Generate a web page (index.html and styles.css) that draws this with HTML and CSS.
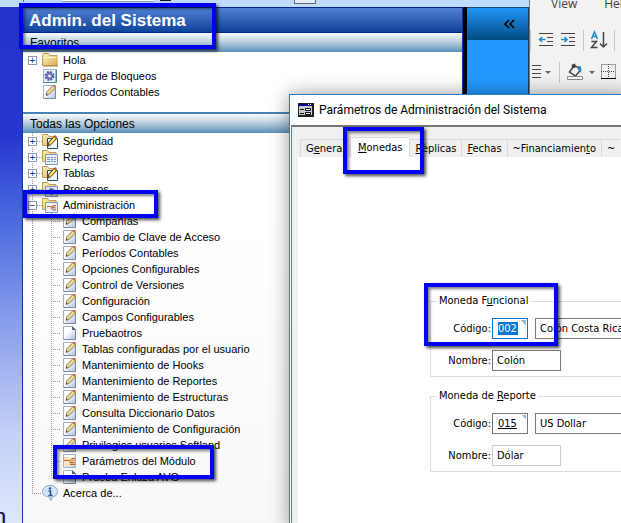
FILE: index.html
```html
<!DOCTYPE html>
<html lang="es">
    <head>
        <meta charset="utf-8">
        <title>Admin. del Sistema</title>
        <link rel="stylesheet" href="styles.css">
    </head>
    <body>
        <svg class="defs" aria-hidden="true">
            <defs>
                <linearGradient id="paper" x1="0" y1="0" x2="1" y2="1">
                    <stop offset="0.4" stop-color="#fff"/>
                    <stop offset="1" stop-color="#a9bfe0"/>
                </linearGradient>
                <linearGradient id="yellow" x1="0" y1="0" x2="1" y2="1">
                    <stop offset="0" stop-color="#fff0bc"/>
                    <stop offset="1" stop-color="#dfae55"/>
                </linearGradient>
                <symbol id="i-page" viewBox="0 0 16 16">
                    <path d="M1.5 1.5h9l3 3v10h-12z" fill="url(#paper)" stroke="#9fb0c8"/>
                    <path d="M1.5 14.5h12v-10" fill="none" stroke="#7b8aa2"/>
                    <path d="M10 1l4 4h-4z" fill="#56657c"/>
                </symbol>
                <symbol id="i-edit" viewBox="0 0 16 16">
                    <path d="M1.5 1.5h12v13h-12z" fill="url(#paper)" stroke="#9fb0c8"/>
                    <path d="M1.5 14.5h12v-10" fill="none" stroke="#7b8aa2"/>
                    <path d="M4 11l1-3.500 6-6 2.500 2.500-6 6z" fill="#f3d88c" stroke="#8a7f60"/>
                    <path d="M10.500 1.500l1.500-1 2 2-1 1.500z" fill="#cf6b62"/>
                    <path d="M4 9.500v2h2z" fill="#444"/>
                </symbol>
                <symbol id="i-folder" viewBox="0 0 16 16">
                    <path d="M.5 13.500v-11l1-1h5l1.500 2h7v10z" fill="url(#yellow)" stroke="#c49c55"/>
                    <path d="M1.500 5.500h13" stroke="#fff6d5"/>
                    <path d="M1 14h15" stroke="#a88242"/>
                </symbol>
                <symbol id="i-folder-edit" viewBox="0 0 16 16">
                    <path d="M.5 12.500v-11h5l1.500 2h7v9z" fill="url(#yellow)" stroke="#c49c55"/>
                    <path d="M5.500 5.500h10v10h-10z" fill="#eef4fc" stroke="#39475c"/>
                    <path d="M6 13l1-4 5-5.500 2.500 2-5.500 6z" fill="#ffe34f" stroke="#3b321b"/>
                    <path d="M12 3l1-1 2 2-1 1z" fill="#c0504d"/>
                </symbol>
                <symbol id="i-folder-list" viewBox="0 0 16 16">
                    <path d="M.5 12.500v-11h5l1.500 2h7v9z" fill="url(#yellow)" stroke="#c49c55"/>
                    <path d="M3.500 5.500h12v10h-12z" fill="#e9f0fa" stroke="#7f97b9"/>
                    <path d="M5 8.500h3m1 0h2m1 0h2M5 10.500h3m1 0h2m1 0h2M5 12.500h3m1 0h2m1 0h2" stroke="#8293bd"/>
                </symbol>
                <symbol id="i-folder-gear" viewBox="0 0 16 16">
                    <path d="M.5 12.500v-11h5l1.500 2h7v9z" fill="url(#yellow)" stroke="#c49c55"/>
                    <path d="M3.500 5.500h12v10h-12z" fill="#dfe6f8" stroke="#7f97b9"/>
                    <circle cx="9.500" cy="10.500" r="3" fill="#6870bd" stroke="#4b529b" stroke-dasharray="2 1"/>
                </symbol>
                <symbol id="i-folder-hand" viewBox="0 0 16 16">
                    <path d="M.5 12.500v-11h5l1.500 2h7v9z" fill="url(#yellow)" stroke="#c49c55"/>
                    <path d="M3.500 5.500h12v10h-12z" fill="#e9f0fa" stroke="#7f97b9"/>
                    <path d="M5 9.500h4l2 1h2M14 8.500h-3l-2 3 2 1.500h3" fill="#eeb88d" stroke="#b36f47"/>
                </symbol>
                <symbol id="i-gear" viewBox="0 0 16 16">
                    <path d="M1.500 1.500h12v13h-12z" fill="#edf1fc" stroke="#a8b2c8"/>
                    <path d="M1 14.500h13.500v-13" fill="none" stroke="#3f8b95"/>
                    <circle cx="7.500" cy="8" r="4" fill="none" stroke="#555da8" stroke-width="2" stroke-dasharray="2 1.140"/>
                    <circle cx="7.500" cy="8" r="3" fill="#8189c8" stroke="#555da8"/>
                    <circle cx="7.500" cy="8" r="1.200" fill="#fff"/>
                </symbol>
                <symbol id="i-hand" viewBox="0 0 16 16">
                    <path d="M1.500 1.500h12v13h-12z" fill="url(#paper)" stroke="#9fb0c8"/>
                    <path d="M2 4h11v9H2z" fill="#fbe3bd"/>
                    <path d="M2 7.500h5l2 1.500h2" fill="none" stroke="#a8683c"/>
                    <path d="M13 5.500h-3l-3 3 1 2.500 2 1h3z" fill="#eeb27c"/>
                    <path d="M13 5.500h-3l-2 2M7.500 9.500h4M8 11.500h5" fill="none" stroke="#a8683c"/>
                </symbol>
                <symbol id="i-info" viewBox="0 0 16 16">
                    <path d="M8 .5c4.500 0 7.500 2.500 7.500 6 0 3-2 5-5 5.500L9 15.500 7 12C3 11.500.5 9.500.5 6.500.5 3 3.500.5 8 .5z" fill="#d5e4f5" stroke="#8ba5c4"/>
                    <circle cx="8" cy="3.500" r="1.200" fill="#24528e"/>
                    <path d="M6.500 6h2v4M6.500 10.500h4" fill="none" stroke="#24528e" stroke-width="1.500"/>
                </symbol>
            </defs>
        </svg>

        <div class="screen">
            <div class="app">
                <div class="toolbar">
                    <span class="tool-mark"></span>
                    <span class="tool-box"></span>
                    <span class="tool-glyph"></span>
                    <span class="tool-button"></span>
                </div>
                <div class="workspace">
                    <div class="wallpaper"><span>n</span></div>
                    <nav class="nav">
                        <h1>Admin. del Sistema</h1>
                        <h2>Favoritos</h2>
                        <ul class="tree favorites">
                            <li><div class="row"><span class="expander">+</span><i class="stub blank"></i><svg><use href="#i-folder"/></svg><a href="#">Hola</a></div></li>
                            <li><div class="row leaf"><svg><use href="#i-gear"/></svg><a href="#">Purga de Bloqueos</a></div></li>
                            <li><div class="row leaf"><svg><use href="#i-edit"/></svg><a href="#">Períodos Contables</a></div></li>
                        </ul>
                        <h2 class="divided">Todas las Opciones</h2>
                        <ul class="tree options">
                            <li><div class="row"><span class="expander">+</span><i class="stub"></i><svg><use href="#i-folder-edit"/></svg><a href="#">Seguridad</a></div></li>
                            <li><div class="row"><span class="expander">+</span><i class="stub"></i><svg><use href="#i-folder-list"/></svg><a href="#">Reportes</a></div></li>
                            <li><div class="row"><span class="expander">+</span><i class="stub"></i><svg><use href="#i-folder-edit"/></svg><a href="#">Tablas</a></div></li>
                            <li><div class="row"><span class="expander">+</span><i class="stub"></i><svg><use href="#i-folder-gear"/></svg><a href="#">Procesos</a></div></li>
                            <li>
                                <div class="row"><span class="expander">−</span><i class="stub"></i><svg><use href="#i-folder-hand"/></svg><a href="#">Administración</a></div>
                                <ul class="branch">
                                    <li class="row"><i class="stub"></i><svg><use href="#i-edit"/></svg><a href="#">Compañías</a></li>
                                    <li class="row"><i class="stub"></i><svg><use href="#i-edit"/></svg><a href="#">Cambio de Clave de Acceso</a></li>
                                    <li class="row"><i class="stub"></i><svg><use href="#i-edit"/></svg><a href="#">Períodos Contables</a></li>
                                    <li class="row"><i class="stub"></i><svg><use href="#i-edit"/></svg><a href="#">Opciones Configurables</a></li>
                                    <li class="row"><i class="stub"></i><svg><use href="#i-edit"/></svg><a href="#">Control de Versiones</a></li>
                                    <li class="row"><i class="stub"></i><svg><use href="#i-edit"/></svg><a href="#">Configuración</a></li>
                                    <li class="row"><i class="stub"></i><svg><use href="#i-edit"/></svg><a href="#">Campos Configurables</a></li>
                                    <li class="row"><i class="stub"></i><svg><use href="#i-page"/></svg><a href="#">Pruebaotros</a></li>
                                    <li class="row"><i class="stub"></i><svg><use href="#i-edit"/></svg><a href="#">Tablas configuradas por el usuario</a></li>
                                    <li class="row"><i class="stub"></i><svg><use href="#i-edit"/></svg><a href="#">Mantenimiento de Hooks</a></li>
                                    <li class="row"><i class="stub"></i><svg><use href="#i-edit"/></svg><a href="#">Mantenimiento de Reportes</a></li>
                                    <li class="row"><i class="stub"></i><svg><use href="#i-edit"/></svg><a href="#">Mantenimiento de Estructuras</a></li>
                                    <li class="row"><i class="stub"></i><svg><use href="#i-edit"/></svg><a href="#">Consulta Diccionario Datos</a></li>
                                    <li class="row"><i class="stub"></i><svg><use href="#i-edit"/></svg><a href="#">Mantenimiento de Configuración</a></li>
                                    <li class="row"><i class="stub"></i><svg><use href="#i-edit"/></svg><a href="#">Privilegios usuarios Softland</a></li>
                                    <li class="row"><i class="stub"></i><svg><use href="#i-hand"/></svg><a href="#">Parámetros del Módulo</a></li>
                                    <li class="row"><i class="stub"></i><svg><use href="#i-page"/></svg><a href="#">Prueba Enlaza AVG</a></li>
                                </ul>
                            </li>
                            <li><div class="row last"><i class="stub"></i><svg><use href="#i-info"/></svg><a href="#">Acerca de...</a></div></li>
                        </ul>
                    </nav>
                    <aside class="side">
                        <button type="button" aria-label="Contraer">
                            <svg viewBox="0 0 12 10"><path d="M5 1L1 5l4 4M10 1L6 5l4 4" fill="none" stroke="#000" stroke-width="1.600"/></svg>
                        </button>
                    </aside>
                </div>
            </div>

            <div class="ribbon">
                <div class="ribbon-tabs"><a href="#">View</a><a href="#">Help</a></div>
                <svg class="ribbon-icons" viewBox="0 0 92 64" width="92" height="64">
                    <g fill="none" stroke="#444">
                        <path d="M9 10.500h14M17 14.500h6M17 18.500h6M9 22.500h14"/>
                        <path d="M31 10.500h14M39 14.500h6M39 18.500h6M31 22.500h14"/>
                        <path d="M9.500 16.500h6M12 14l-2.500 2.500L12 19M31 16.500h6M34.500 14l2.500 2.500-2.500 2.500" stroke="#2289cc" stroke-width="1.500"/>
                        <path d="M.5 7v21M53.500 7v21M84.500 7v21M29.500 39v21" stroke="#c8c6c4"/>
                        <path d="M61.500 16l3-7 3 7M62.500 13.500h4" stroke="#2289cc" stroke-width="1.500"/>
                        <path d="M61.500 18.500h5l-5 6h6" stroke-width="1.500"/>
                        <path d="M73.500 9v15M70 20.500l3.500 3.500 3.500-3.500" stroke-width="1.500"/>
                        <path d="M2 42.500h9M2 46.500h9M2 50.500h9M2 54.500h9"/>
                        <path d="M44.500 42l6 5-5 6-6-4zM44.500 45v-3.500l-2 .5v4" stroke-width="1.500"/>
                        <path d="M37.500 53.500h15v3h-15z" fill="#fff" stroke="#888"/>
                        <path d="M71.500 41.500h14v14h-14zM78.500 41v14M71 48.500h14" stroke-dasharray="1 1"/>
                        <path d="M71 55.500h15" stroke="#000"/>
                    </g>
                    <path d="M48 43c3-1 4 2 3 7-1-2-2-3-3-3z" fill="#2289cc"/>
                    <path d="M15 48h6l-3 3zM59 48h6l-3 3z" fill="#666"/>
                </svg>
            </div>
        </div>

        <div class="dialog" role="dialog" aria-labelledby="dialogTitle">
            <div class="dialog-title">
                <svg viewBox="0 0 16 14" width="16" height="14">
                    <path d="M0 0h16v14H0z" fill="#222"/>
                    <path d="M1 1h13v11H1z" fill="#c9c9c9"/>
                    <path d="M1 1h13v2H1z" fill="#00008b"/>
                    <path d="M10 1.500h1m1 0h1" stroke="#fff"/>
                    <path d="M2 6.500h4M2 10.500h4M7.500 5.500h5v2h-5zM7.500 9.500h5v2h-5z" fill="#fff" stroke="#111"/>
                </svg>
                <span id="dialogTitle">Parámetros de Administración del Sistema</span>
            </div>
            <div class="dialog-body">
                <div class="tabs" role="tablist">
                    <button type="button" role="tab">G<u>e</u>neral</button>
                    <button type="button" role="tab" class="active" aria-selected="true"><u>M</u>onedas</button>
                    <button type="button" role="tab"><u>R</u>éplicas</button>
                    <button type="button" role="tab"><u>F</u>echas</button>
                    <button type="button" role="tab">~Financiamien<u>t</u>o</button>
                    <button type="button" role="tab">~</button>
                </div>
                <form class="tab-page">
                    <fieldset>
                        <legend>Moneda F<u>u</u>ncional</legend>
                        <label for="funcCode">Código:</label>
                        <div class="fields">
                            <input type="text" id="funcCode" class="code selected" value="002">
                            <input type="text" class="wide" aria-label="Descripción" value="Colón Costa Rica">
                        </div>
                        <label for="funcName">Nombre:</label>
                        <div class="fields"><input type="text" id="funcName" class="name" value="Colón"></div>
                    </fieldset>
                    <fieldset>
                        <legend>Moneda de <u>R</u>eporte</legend>
                        <label for="repCode">Código:</label>
                        <div class="fields">
                            <input type="text" id="repCode" class="code" value="015">
                            <input type="text" class="wide" aria-label="Descripción" value="US Dollar">
                        </div>
                        <label for="repName">Nombre:</label>
                        <div class="fields"><input type="text" id="repName" class="name readonly" value="Dólar" readonly></div>
                    </fieldset>
                </form>
            </div>
        </div>

        <div class="mark mark-title"></div>
        <div class="mark mark-admin"></div>
        <div class="mark mark-params"></div>
        <div class="mark mark-tab"></div>
        <div class="mark mark-code"></div>
    </body>
</html>
```
FILE: styles.css
```css
* {
    box-sizing: border-box;
}
body {
    position: relative;
    margin: 0;
    height: 100vh;
    overflow: hidden;
    font-family: "Liberation Sans", Arial, sans-serif;
    font-size: 11px;
    color: #000;
}
a {
    color: inherit;
    text-decoration: none;
}
ul {
    list-style: none;
    margin: 0;
    padding: 0;
}
.defs {
    position: absolute;
    width: 0;
    height: 0;
}
.screen {
    display: flex;
    height: 100%;
}
.app {
    flex: 1;
    min-width: 0;
    display: flex;
    flex-direction: column;
}

/* top toolbar */
.toolbar {
    display: flex;
    align-items: flex-start;
    height: 7px;
    padding-left: 23px;
    background-color: #bfdbff;
}
.tool-mark {
    width: 1px;
    height: 2px;
    background-color: #5070b0;
}
.tool-box {
    width: 92px;
    height: 2px;
    margin-left: 38px;
    background-color: #fff;
    border-bottom: 1px solid #8a9ab5;
}
.tool-glyph {
    width: 11px;
    height: 1px;
    margin-left: 6px;
    background-color: #111;
}
.tool-button {
    width: 22px;
    height: 4px;
    margin-left: 123px;
    background-color: #e4ecf8;
    border: 1px solid #667;
    border-top: none;
}

/* navigation */
.workspace {
    flex: 1;
    min-height: 0;
    display: flex;
}
.wallpaper {
    display: flex;
    align-items: flex-end;
    width: 22px;
    overflow: hidden;
    background: linear-gradient(#2433cb, #2637cf 25%, #4a69df 41%, #8ba0ec 62%, #c3cff7 82%, #dde7fc);
    color: #101050;
    font-size: 24px;
}
.wallpaper span {
    line-height: 12px;
    margin-left: -7px;
}
.nav {
    flex: 1;
    min-width: 0;
    display: flex;
    flex-direction: column;
    border-left: 1px solid #0a37a0;
    border-right: 1px solid #0a37a0;
    background: linear-gradient(#fff 40%, #f8f8f8);
}
.nav h1 {
    margin: 0;
    height: 26px;
    padding-left: 6px;
    border-top: 1px solid #00248c;
    border-bottom: 1px solid #00248c;
    background: linear-gradient(#5180d2, #0f439a);
    color: #fff;
    font-size: 17px;
    line-height: 26px;
}
.nav h2 {
    margin: 0;
    height: 19px;
    padding-left: 7px;
    background: linear-gradient(#fafcfd, #b5cbdc 50%, #5a8fb9);
    font-size: 12px;
    font-weight: normal;
    line-height: 21px;
}
.nav .divided {
    height: 21px;
    border-top: 2px solid #4682b4;
}
.tree {
    padding-left: 5px;
}
.favorites {
    height: 60px;
}
.options {
    flex: 1;
    background: repeating-linear-gradient(#999 0 1px, transparent 1px 2px) 9px 0 / 1px 360px no-repeat;
}
.branch {
    padding-left: 23px;
    background: repeating-linear-gradient(#999 0 1px, transparent 1px 2px) 23px 0 / 1px 264px no-repeat;
}
.row {
    display: flex;
    align-items: center;
    height: 16px;
    white-space: nowrap;
}
.row svg {
    flex: none;
    width: 16px;
    height: 16px;
    margin-right: 5px;
}
.branch svg {
    margin-left: 2px;
    margin-right: 4px;
}
.leaf {
    padding-left: 14px;
}
.last {
    padding-left: 4px;
}
.expander {
    width: 9px;
    height: 9px;
    border: 1px solid #8a9bb5;
    background-color: #fff;
    color: #10308c;
    font-size: 10px;
    line-height: 7px;
    text-align: center;
}
.stub {
    width: 5px;
    height: 1px;
    background: repeating-linear-gradient(90deg, #999 0 1px, transparent 1px 2px);
}
.last .stub {
    width: 10px;
}
.branch .stub {
    width: 9px;
}
.stub.blank {
    background: none;
}

/* collapsed side column */
.side {
    width: 66px;
    border-left: 4px solid #000;
    border-right: 1px solid #163d63;
    background-color: #2299ff;
}
.side button {
    display: flex;
    justify-content: flex-end;
    align-items: center;
    width: 100%;
    height: 33px;
    padding: 0 12px;
    border: none;
    border-top: 1px solid #0a4a80;
    background: linear-gradient(#2196f8, #024a82);
}
.side svg {
    width: 12px;
    height: 10px;
}

/* office ribbon */
.ribbon {
    width: 92px;
    overflow: hidden;
    background-color: #f3f2f1;
    border-left: 1px solid #777;
}
.ribbon-tabs {
    display: flex;
    gap: 27px;
    height: 23px;
    padding-left: 21px;
    font-family: "Open Sans", sans-serif;
    font-size: 12px;
    line-height: 8px;
    color: #444;
}

/* dialog window */
.dialog {
    position: absolute;
    top: 94px;
    left: 289px;
    right: -8px;
    bottom: -8px;
    display: flex;
    flex-direction: column;
    overflow: hidden;
    border: 1px solid #1f7fcb;
    background-color: #fff;
    box-shadow: 0 0 18px rgba(0, 0, 0, 0.4);
    font-family: "DejaVu Sans Condensed", "DejaVu Sans", sans-serif;
    font-size: 11px;
}
.dialog-title {
    display: flex;
    align-items: center;
    gap: 5px;
    height: 30px;
    padding-left: 8px;
    font-family: Roboto, sans-serif;
    font-size: 12px;
    white-space: nowrap;
}
.dialog-body {
    flex: 1;
    display: flex;
    flex-direction: column;
    margin-left: 1px;
    padding: 10px 0 0 6px;
    border-top: 2px solid #777;
    border-left: 1px solid #777;
    background-color: #f0f0f0;
}
.tabs {
    display: flex;
    align-items: flex-end;
    height: 20px;
    padding-left: 2px;
}
.tabs button {
    flex: none;
    height: 18px;
    padding: 0 5px;
    border: 1px solid #d9d9d9;
    border-bottom: none;
    border-right: none;
    background-color: #f0f0f0;
    font: inherit;
    color: #000;
}
.tabs .active {
    height: 20px;
    padding: 0 7px;
    background-color: #fff;
}
.tab-page {
    flex: 1;
    display: flex;
    flex-direction: column;
    gap: 12px;
    padding: 137px 0 0 132px;
    background-color: #fff;
}
fieldset {
    display: grid;
    grid-template-columns: 60px 1fr;
    align-items: center;
    gap: 11px 1px;
    min-width: 0;
    margin: 0;
    padding: 10px 0 5px;
    border: 1px solid #dcdcdc;
}
legend {
    margin-left: 6px;
    padding: 0 2px;
    line-height: 14px;
}
label {
    text-align: right;
}
.fields {
    display: flex;
    gap: 7px;
}
.fields input {
    height: 21px;
    padding: 0 4px;
    border: 1px solid #777;
    background-color: #fff;
    font: inherit;
    color: #000;
}
.fields .code {
    width: 36px;
    padding: 0 5px;
    background: linear-gradient(to top right, transparent 50%, #9bb7d4 50%) right 1px top 1px / 5px 5px no-repeat #fff;
    text-decoration: underline;
}
.fields .selected {
    border-color: #0078d7;
    background:
        linear-gradient(to top right, transparent 50%, #9bb7d4 50%) right 1px top 1px / 5px 5px no-repeat,
        linear-gradient(#0078d7, #0078d7) 5px 3px / 20px 13px no-repeat #fff;
    color: #fff;
    text-decoration: none;
}
.fields .wide {
    flex: 1;
    min-width: 0;
}
.fields .name {
    width: 69px;
}
.fields .readonly {
    border-color: #ccc;
}

/* highlight boxes drawn over the windows */
.mark {
    position: absolute;
    border: 4px solid #0000fa;
    box-shadow: 2px 2px 3px rgba(0, 0, 0, 0.7), inset 2px 2px 3px rgba(0, 0, 0, 0.5);
    pointer-events: none;
}
.mark-title {
    top: 3px;
    left: 19px;
    width: 197px;
    height: 46px;
}
.mark-admin {
    top: 190px;
    left: 23px;
    width: 135px;
    height: 28px;
}
.mark-params {
    top: 445px;
    left: 53px;
    width: 161px;
    height: 34px;
}
.mark-tab {
    top: 127px;
    left: 343px;
    width: 81px;
    height: 47px;
}
.mark-code {
    top: 283px;
    left: 424px;
    width: 134px;
    height: 63px;
}
```
